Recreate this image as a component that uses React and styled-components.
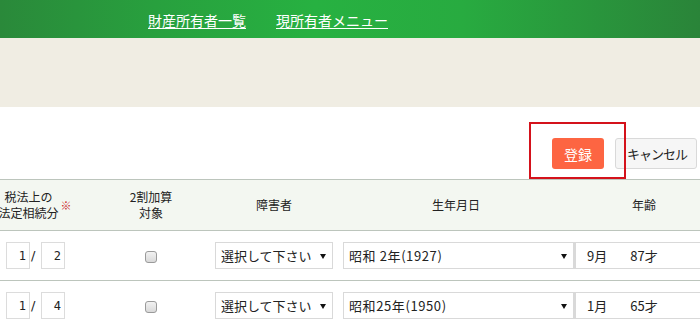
import React from 'react'
import styled, { createGlobalStyle } from 'styled-components'

const GlobalStyle = createGlobalStyle`
  html, body {
    margin: 0;
    padding: 0;
    overflow: hidden;
    background: #fff;
  }
  body {
    font-family: "Noto Sans CJK JP", "Noto Sans", sans-serif;
    color: #222;
  }
`

const COLS = '114px 118px 128px 236px 140px'

const rows = [
  { num: 1, den: 2, era: '昭和 2年(1927)', month: '9月', age: '87才' },
  { num: 1, den: 4, era: '昭和25年(1950)', month: '1月', age: '65才' },
]

const App = () => {
  return (
    <Page>
      <GlobalStyle />
      <TopBar>
        <NavLink href="#">財産所有者一覧</NavLink>
        <NavLink href="#">現所有者メニュー</NavLink>
      </TopBar>
      <InfoBand />
      <Actions>
        <Highlight>
          <SubmitButton>登録</SubmitButton>
        </Highlight>
        <CancelButton>キャンセル</CancelButton>
      </Actions>

      <Table>
        <HeadRow>
          <HeadCell>
            税法上の<br />法定相続分<Mark>※</Mark>
          </HeadCell>
          <HeadCell>2割加算<br />対象</HeadCell>
          <HeadCell>障害者</HeadCell>
          <HeadCell>生年月日</HeadCell>
          <HeadCell>年齢</HeadCell>
        </HeadRow>

        {rows.map((r, i) => (
          <BodyRow key={i}>
            <Cell>
              <Fraction>
                <NumInput defaultValue={r.num} size={2} />
                <Slash>/</Slash>
                <NumInput defaultValue={r.den} size={2} />
              </Fraction>
            </Cell>
            <Cell>
              <Check type="checkbox" />
            </Cell>
            <Cell>
              <SelectWrap $width={118}>
                <Select defaultValue="" $pr={20}>
                  <option value="">選択して下さい</option>
                </Select>
              </SelectWrap>
            </Cell>
            <Cell $align="start">
              <SelectWrap $width={231} $ml={5}>
                <Select defaultValue={r.era} $spacing={0.6}>
                  <option>{r.era}</option>
                </Select>
              </SelectWrap>
            </Cell>
            <Cell $align="start">
              <AgeBox>
                <span>{r.month}</span>
                <span>{r.age}</span>
              </AgeBox>
            </Cell>
          </BodyRow>
        ))}
      </Table>
    </Page>
  )
}

export default App

const Page = styled.div`
  width: 700px;
  height: 325px;
  overflow: hidden;
`

const TopBar = styled.header`
  height: 38px;
  display: flex;
  align-items: center;
  gap: 30px;
  padding-left: 148px;
  box-sizing: border-box;
  background: linear-gradient(
    90deg,
    #2a893a 0%,
    #28a03e 22%,
    #27b141 45%,
    #28ab40 66%,
    #2a8439 100%
  );
`

const NavLink = styled.a`
  color: #fff;
  font-size: 14px;
  line-height: 16px;
  text-decoration: underline;
  text-underline-offset: 2px;
  margin-top: 1px;
`

const InfoBand = styled.div`
  height: 69px;
  background: #f0ede3;
`

const Actions = styled.div`
  height: 72px;
  display: flex;
  justify-content: flex-end;
  align-items: flex-start;
  gap: 11px;
  padding: 31px 3px 0 0;
  box-sizing: border-box;
`

const Highlight = styled.div`
  position: relative;

  &::after {
    content: '';
    position: absolute;
    left: -23px;
    top: -16px;
    width: 97px;
    height: 57px;
    box-sizing: border-box;
    border: 2px solid #d4121b;
    pointer-events: none;
    z-index: 2;
  }
`

const BaseButton = styled.button`
  height: 31px;
  border-radius: 3px;
  font-family: "Noto Sans CJK JP", sans-serif;
  font-size: 13px;
  line-height: 1;
  cursor: pointer;
  box-sizing: border-box;
`

const SubmitButton = styled(BaseButton)`
  width: 52px;
  border: none;
  background: #fd6542;
  color: #fff;
  font-size: 14px;
`

const CancelButton = styled(BaseButton)`
  width: 82px;
  padding: 0 0 0 2px;
  background: #f6f6f6;
  border: 1px solid #d9d9d9;
  color: #222;
  letter-spacing: -1px;
`

const Table = styled.div`
  margin-left: -22px;
  width: 736px;
`

const HeadRow = styled.div`
  display: grid;
  grid-template-columns: ${COLS};
  height: 52px;
  box-sizing: border-box;
  border-top: 1px solid #bcc5bc;
  border-bottom: 1px solid #bcc5bc;
  background: #f3f7f1;
`

const HeadCell = styled.div`
  display: flex;
  align-items: center;
  justify-content: center;
  text-align: center;
  font-size: 12px;
  line-height: 16px;
  color: #222;
`

const Mark = styled.span`
  color: #cc2a2a;
  font-size: 11px;
  margin-left: 2px;
`

const BodyRow = styled.div`
  display: grid;
  grid-template-columns: ${COLS};
  height: 50px;
  box-sizing: border-box;
  border-bottom: 1px solid #bcc5bc;
`

const Cell = styled.div`
  display: flex;
  align-items: center;
  justify-content: ${({ $align }) => ($align === 'start' ? 'flex-start' : 'center')};
`

const Fraction = styled.div`
  display: flex;
  align-items: center;
  margin-left: 1px;
`

const NumInput = styled.input`
  width: 24px;
  height: 27px;
  box-sizing: border-box;
  border: 1px solid #dcdcdc;
  padding: 0 3px 0 0;
  text-align: right;
  font-family: "DejaVu Sans Mono", monospace;
  font-size: 12px;
  color: #222;
  outline: none;
`

const Slash = styled.span`
  width: 10px;
  font-size: 13px;
  line-height: 1;
  padding-left: 1px;
  font-family: "DejaVu Sans", sans-serif;
`

const Check = styled.input`
  appearance: none;
  width: 12px;
  height: 12px;
  margin: 2px 0 0;
  border: 1px solid #9a9a9a;
  border-radius: 3px;
  background: linear-gradient(#f2f2f2, #d9d9d9);
`

const SelectWrap = styled.div`
  position: relative;
  width: ${({ $width }) => $width}px;
  margin-left: ${({ $ml }) => $ml || 0}px;

  &::after {
    content: '';
    position: absolute;
    right: 7px;
    top: 12px;
    border-left: 3px solid transparent;
    border-right: 3px solid transparent;
    border-top: 5px solid #111;
    pointer-events: none;
  }
`

const Select = styled.select`
  appearance: none;
  width: 100%;
  height: 27px;
  box-sizing: border-box;
  border: 1px solid #d9d9d9;
  border-radius: 0;
  background: #fff;
  padding: 0 ${({ $pr }) => $pr || 16}px 0 5px;
  font-family: "Noto Sans CJK JP", sans-serif;
  font-size: 13px;
  letter-spacing: ${({ $spacing }) => $spacing || 0}px;
  color: #222;
  outline: none;
`

const AgeBox = styled.div`
  width: 140px;
  height: 27px;
  box-sizing: border-box;
  border-top: 1px solid #d9d9d9;
  border-bottom: 1px solid #d9d9d9;
  border-left: 2px solid #d9d9d9;
  display: flex;
  align-items: center;
  gap: 23px;
  padding-left: 11px;
  font-size: 13px;
  color: #222;
`
